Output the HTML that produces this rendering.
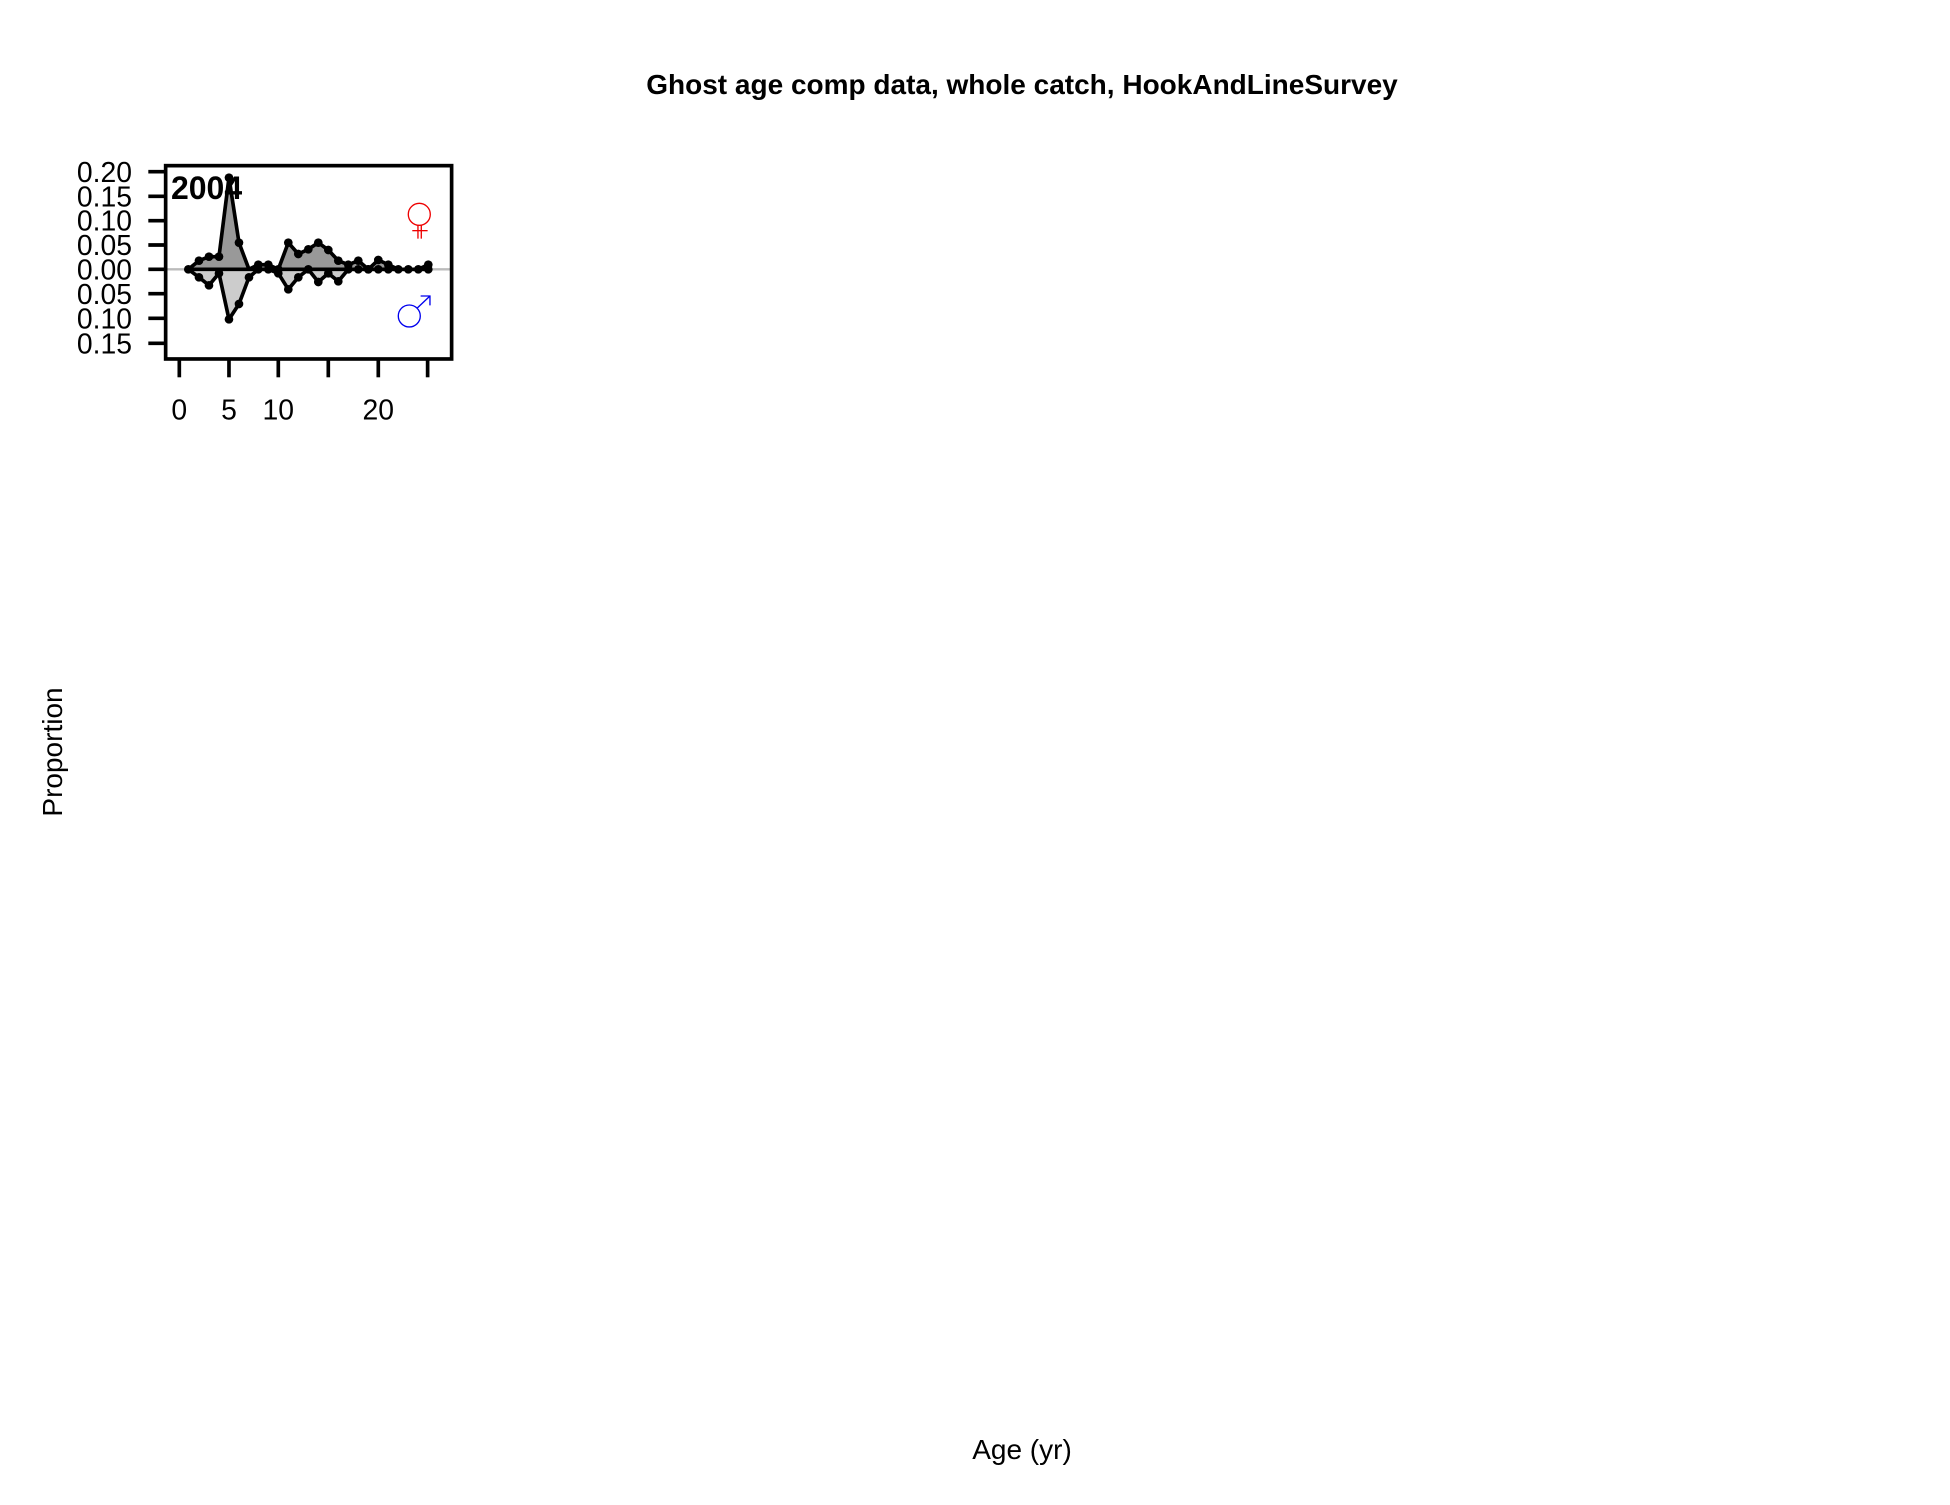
<!DOCTYPE html>
<html><head><style>
body{margin:0;background:#fff;width:1950px;height:1500px;overflow:hidden;font-family:"Liberation Sans",Arial,sans-serif;}
</style></head><body>
<svg width="1950" height="1500" xmlns="http://www.w3.org/2000/svg" font-family="Liberation Sans, Arial, sans-serif">
<text x="1022" y="94" font-size="28" font-weight="bold" text-anchor="middle">Ghost age comp data, whole catch, HookAndLineSurvey</text>
<text x="1022" y="1459" font-size="28" text-anchor="middle">Age (yr)</text>
<text transform="translate(62,752) rotate(-90)" font-size="28" text-anchor="middle">Proportion</text>
<g transform="translate(0,100) scale(0.3333)">
<line x1="495" y1="508" x2="1355" y2="508" stroke="#bbb" stroke-width="7"/>
<polygon fill="#999" stroke="#000" stroke-width="11" stroke-linejoin="round" points="565,508 597,482 627,470 657,470 687,233 717,428 747,508 775,494 805,494 835,508 865,428 895,462 925,448 955,428 985,450 1015,482 1045,494 1075,482 1105,508 1135,480 1165,494 1195,508 1225,508 1255,508 1285,494 1285,508 565,508"/>
<polygon fill="#ccc" stroke="#000" stroke-width="11" stroke-linejoin="round" points="565,508 597,532 627,556 657,520 687,658 717,612 747,532 775,508 805,508 835,520 865,568 895,532 925,508 955,546 985,520 1015,544 1045,508 1285,508 565,508"/>
<g fill="#000">
<circle cx="565" cy="508" r="13"/><circle cx="597" cy="482" r="13"/><circle cx="627" cy="470" r="13"/><circle cx="657" cy="470" r="13"/><circle cx="687" cy="233" r="13"/><circle cx="717" cy="428" r="13"/><circle cx="775" cy="494" r="13"/><circle cx="805" cy="494" r="13"/><circle cx="835" cy="508" r="13"/><circle cx="865" cy="428" r="13"/><circle cx="895" cy="462" r="13"/><circle cx="925" cy="448" r="13"/><circle cx="955" cy="428" r="13"/><circle cx="985" cy="450" r="13"/><circle cx="1015" cy="482" r="13"/><circle cx="1045" cy="494" r="13"/><circle cx="1075" cy="482" r="13"/><circle cx="1105" cy="508" r="13"/><circle cx="1135" cy="480" r="13"/><circle cx="1165" cy="494" r="13"/><circle cx="1195" cy="508" r="13"/><circle cx="1225" cy="508" r="13"/><circle cx="1255" cy="508" r="13"/><circle cx="1285" cy="494" r="13"/>
<circle cx="597" cy="532" r="13"/><circle cx="627" cy="556" r="13"/><circle cx="657" cy="520" r="13"/><circle cx="687" cy="658" r="13"/><circle cx="717" cy="612" r="13"/><circle cx="747" cy="532" r="13"/><circle cx="775" cy="508" r="13"/><circle cx="805" cy="508" r="13"/><circle cx="835" cy="520" r="13"/><circle cx="865" cy="568" r="13"/><circle cx="895" cy="532" r="13"/><circle cx="925" cy="508" r="13"/><circle cx="955" cy="546" r="13"/><circle cx="985" cy="520" r="13"/><circle cx="1015" cy="544" r="13"/><circle cx="1045" cy="508" r="13"/><circle cx="1075" cy="508" r="13"/><circle cx="1105" cy="508" r="13"/><circle cx="1135" cy="508" r="13"/><circle cx="1165" cy="508" r="13"/><circle cx="1285" cy="508" r="13"/>
</g>
<rect x="497" y="197" width="858" height="580" fill="none" stroke="#000" stroke-width="11"/>
<g stroke="#000" stroke-width="11">
<line x1="445" y1="215" x2="495" y2="215"/><line x1="445" y1="289" x2="495" y2="289"/><line x1="445" y1="362" x2="495" y2="362"/><line x1="445" y1="435" x2="495" y2="435"/><line x1="445" y1="508" x2="495" y2="508"/><line x1="445" y1="581" x2="495" y2="581"/><line x1="445" y1="655" x2="495" y2="655"/><line x1="445" y1="730" x2="495" y2="730"/>
<line x1="538" y1="777" x2="538" y2="832"/><line x1="687" y1="777" x2="687" y2="832"/><line x1="835" y1="777" x2="835" y2="832"/><line x1="985" y1="777" x2="985" y2="832"/><line x1="1135" y1="777" x2="1135" y2="832"/><line x1="1283" y1="777" x2="1283" y2="832"/>
</g>
<g font-size="85" text-anchor="end">
<text x="396" y="246">0.20</text><text x="396" y="319">0.15</text><text x="396" y="392">0.10</text><text x="396" y="465">0.05</text><text x="396" y="539">0.00</text><text x="396" y="612">0.05</text><text x="396" y="686">0.10</text><text x="396" y="760">0.15</text>
</g>
<g font-size="85" text-anchor="middle">
<text x="538" y="958">0</text><text x="687" y="958">5</text><text x="835" y="958">10</text><text x="1135" y="958">20</text>
</g>
<text x="513" y="297" font-size="96" font-weight="bold">2004</text>
<g stroke="#e00" stroke-width="4" fill="none"><circle cx="1258" cy="343" r="33"/><line x1="1254" y1="376" x2="1254" y2="416"/><line x1="1264" y1="376" x2="1264" y2="416"/><line x1="1237" y1="392" x2="1283" y2="392"/></g>
<g stroke="#00e" stroke-width="4" fill="none"><circle cx="1228" cy="648" r="33"/><line x1="1252" y1="624" x2="1290" y2="588"/><polyline points="1262,588 1290,588 1290,616"/></g>
</g>
</svg>
</body></html>
